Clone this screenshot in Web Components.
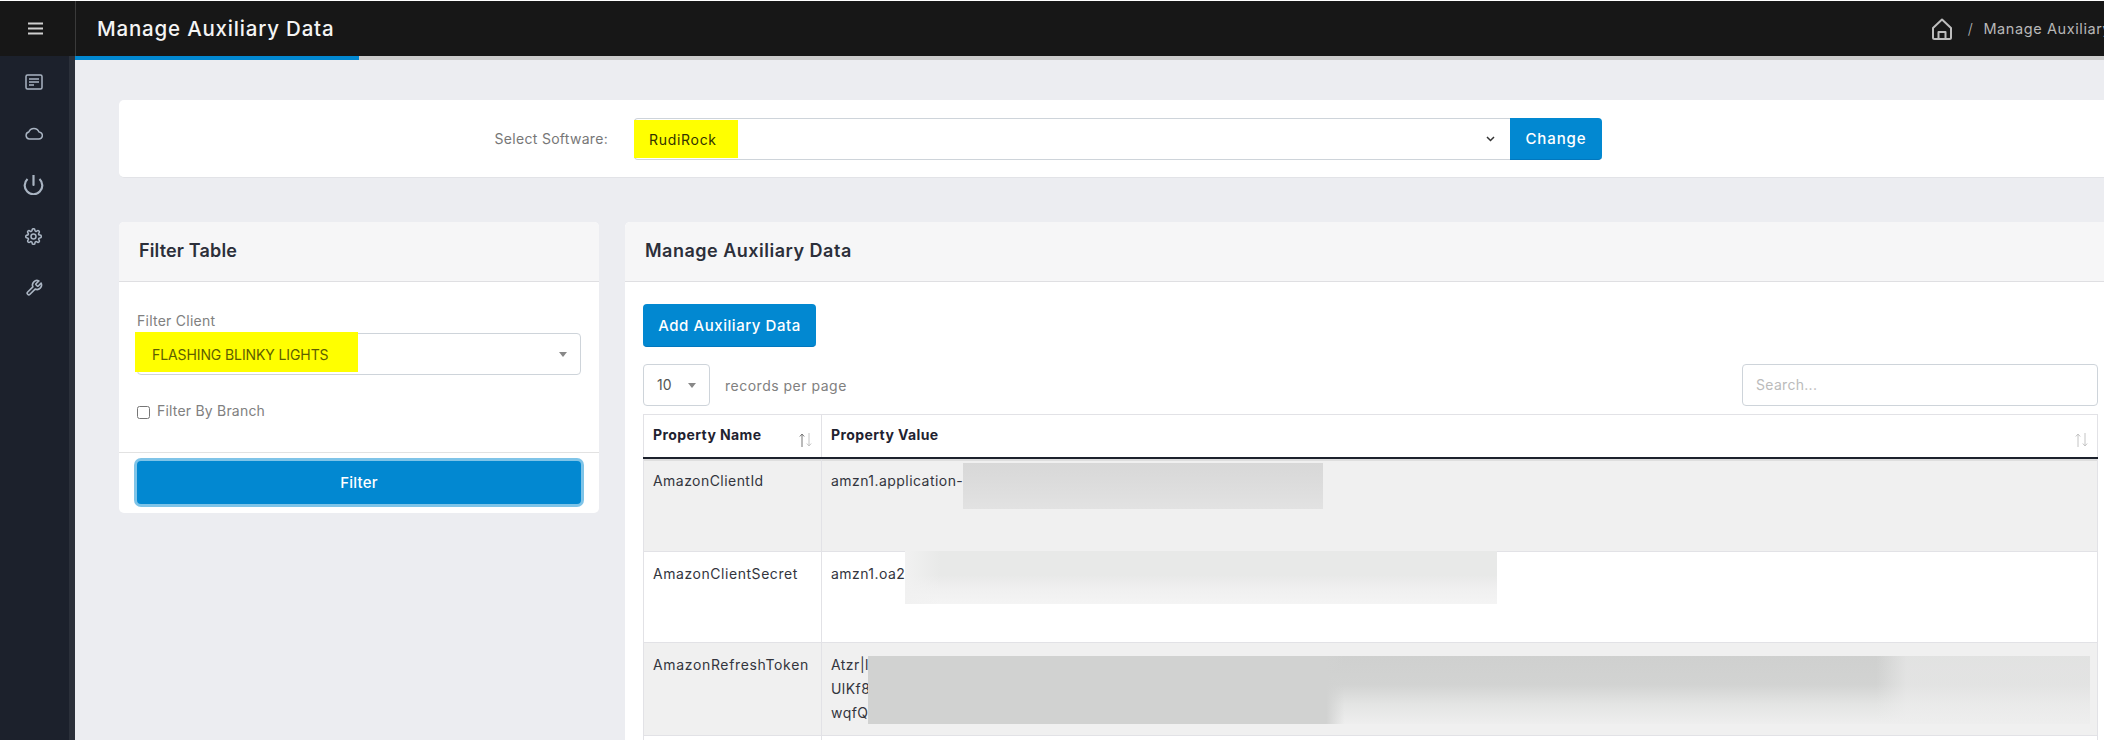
<!DOCTYPE html>
<html>
<head>
<meta charset="utf-8">
<title>Manage Auxiliary Data</title>
<style>
    html, body {
        margin: 0;
        padding: 0;
        width: 2104px;
        height: 740px;
        overflow: hidden;
        background: #fff;
        font-family: Inter, "Liberation Sans", sans-serif;
    }
    body { padding-top: 1px; box-sizing: border-box; }
</style>
</head>
<body>
<app-topbar heading="Manage Auxiliary Data"></app-topbar>
<app-layout>
    <app-sidebar slot="side"></app-sidebar>
    <software-card></software-card>
    <div-row>
        <filter-card></filter-card>
        <aux-card></aux-card>
    </div-row>
</app-layout>

<script>
class BaseElement extends HTMLElement {
    constructor() {
        super();
        this.attachShadow({ mode: 'open' });
    }
    getStyle() { return ''; }
    getMarkup() { return '<slot></slot>'; }
    connectedCallback() {
        const template = document.createElement('template');
        template.innerHTML = `<style>:host, * { box-sizing: border-box; } ${this.getStyle()}</style>${this.getMarkup()}`;
        this.shadowRoot.appendChild(template.content.cloneNode(true));
    }
}

class AppTopbar extends BaseElement {
    getStyle() {
        return `
            :host { display: flex; width: 2150px; height: 55px; background: #171717; color: #f4f4f4; align-items: center; }
            .burger { width: 76px; height: 55px; border-right: 1px solid #3a3a3a; display: flex; align-items: center; justify-content: center; padding-right: 5px; }
            h1 { margin: 0 0 0 21px; font-size: 20.5px; line-height: 55px; font-weight: 500; letter-spacing: 0.8px; white-space: nowrap; }
            nav { margin-left: auto; display: flex; align-items: center; color: #b8b8b8; font-size: 14.5px; letter-spacing: 0.6px; white-space: nowrap; }
            .sep { margin: 0 10px 0 16px; font-weight: 300; }
            svg { display: block; }
        `;
    }
    getMarkup() {
        return `
            <div class="burger">
                <svg width="15" height="13" viewBox="0 0 15 13"><path d="M0 1.5h15M0 6.5h15M0 11.5h15" stroke="#cfcfcf" stroke-width="2.2"/></svg>
            </div>
            <h1>${this.getAttribute('heading')}</h1>
            <nav>
                <svg width="20" height="22" viewBox="0 0 20 22" fill="none" stroke="#bdbdbd" stroke-width="2" stroke-linejoin="round"><path d="M1 10 10 1.5 19 10v9.5a1.5 1.5 0 0 1-1.5 1.5h-15A1.5 1.5 0 0 1 1 19.500z"/><path d="M6.500 21v-7h7v7"/></svg>
                <span class="sep">/</span>
                <span>Manage Auxiliary Data</span>
            </nav>
        `;
    }
}

class AppLayout extends BaseElement {
    getStyle() {
        return `
            :host { display: flex; height: 684px; overflow: hidden; }
            .main { flex: none; width: 2095px; background: #ecedf1; }
            .progress { height: 4px; background: #cccccc; }
            .progress div { width: 284px; height: 4px; background: #0288d1; }
            .content { padding: 40px 54px 0 44px; display: flex; flex-direction: column; gap: 44px; }
        `;
    }
    getMarkup() {
        return `
            <slot name="side"></slot>
            <div class="main">
                <div class="progress"><div></div></div>
                <div class="content"><slot></slot></div>
            </div>
        `;
    }
}

class AppSidebar extends BaseElement {
    getStyle() {
        return `
            :host { display: block; flex: none; width: 75px; background: #1c212c; border-right: 6px solid #2b303a; padding-right: 2px; }
            a { display: flex; height: 51.5px; align-items: center; justify-content: center; }
            svg { display: block; fill: none; stroke: #a9b4c2; stroke-linecap: round; stroke-linejoin: round; }
        `;
    }
    getMarkup() {
        return `
            <a><svg width="18" height="16" viewBox="0 0 18 16" stroke-width="1.5"><rect x="1" y="1" width="16" height="14" rx="1.500"/><path d="M4 5h10M4 8h10M4 11h5" stroke-linecap="butt"/></svg></a>
            <a><svg width="18" height="13" viewBox="0 0 18 13" stroke-width="1.500"><path d="M4.500 12a3.500 3.500 0 0 1-.7-6.900A5.500 5.500 0 0 1 14 5a3.500 3.500 0 0 1-.3 7z"/></svg></a>
            <a><svg width="21" height="20" viewBox="0 0 21 20" stroke-width="2.200" stroke-linecap="butt"><path d="M10.500 0v10"/><path d="M4.500 4a8.800 8.800 0 1 0 12 0" stroke-linecap="butt"/></svg></a>
            <a><svg width="17" height="17" viewBox="0 0 24 24" stroke-width="2.200"><circle cx="12" cy="12" r="3.500"/><path d="M19.400 15a1.650 1.650 0 0 0 .33 1.820l.06.06a2 2 0 0 1 0 2.830 2 2 0 0 1-2.830 0l-.06-.06a1.650 1.650 0 0 0-1.820-.33 1.650 1.650 0 0 0-1 1.510V21a2 2 0 0 1-2 2 2 2 0 0 1-2-2v-.09A1.650 1.650 0 0 0 9 19.400a1.650 1.650 0 0 0-1.820.33l-.06.06a2 2 0 0 1-2.830 0 2 2 0 0 1 0-2.830l.06-.06a1.650 1.650 0 0 0 .33-1.820 1.650 1.650 0 0 0-1.510-1H3a2 2 0 0 1-2-2 2 2 0 0 1 2-2h.09A1.650 1.650 0 0 0 4.600 9a1.650 1.650 0 0 0-.33-1.820l-.06-.06a2 2 0 0 1 0-2.830 2 2 0 0 1 2.830 0l.06.06a1.650 1.650 0 0 0 1.820.33H9a1.650 1.650 0 0 0 1-1.510V3a2 2 0 0 1 2-2 2 2 0 0 1 2 2v.09a1.650 1.650 0 0 0 1 1.510 1.650 1.650 0 0 0 1.820-.33l.06-.06a2 2 0 0 1 2.830 0 2 2 0 0 1 0 2.830l-.06.06a1.650 1.650 0 0 0-.33 1.820V9a1.650 1.650 0 0 0 1.510 1H21a2 2 0 0 1 2 2 2 2 0 0 1-2 2h-.09a1.650 1.650 0 0 0-1.510 1z"/></svg></a>
            <a><svg width="18" height="18" viewBox="0 0 24 24" stroke-width="2.200"><path d="M14.700 6.300a1 1 0 0 0 0 1.400l1.600 1.600a1 1 0 0 0 1.400 0l3.770-3.770a6 6 0 0 1-7.940 7.940l-6.910 6.910a2.120 2.120 0 0 1-3-3l6.910-6.910a6 6 0 0 1 7.940-7.940l-3.760 3.760z"/></svg></a>
        `;
    }
}

class DivRow extends BaseElement {
    getStyle() {
        return `:host { display: flex; gap: 26px; align-items: flex-start; }`;
    }
}

class AppButton extends BaseElement {
    getStyle() {
        return `
            :host { display: block; }
            button { display: block; width: 100%; height: 43px; border: 0; border-bottom: 1px solid #0277bd; border-radius: 4px; background: #0288d1; color: #fff; font: 500 15px Inter, "Liberation Sans", sans-serif; letter-spacing: 0.55px; padding: 0; }
            :host([focus]) button { box-shadow: 0 0 0 3px #7fc4e8; border-bottom: 0; letter-spacing: 0.2px; }
            :host([joined]) button { border-radius: 0 4px 4px 0; height: 42px; letter-spacing: 0.9px; }
        `;
    }
    getMarkup() {
        return `<button><slot></slot></button>`;
    }
}

class SoftwareCard extends BaseElement {
    getStyle() {
        return `
            :host { display: flex; height: 78px; background: #fff; border-radius: 5px; border-bottom: 1px solid #e2e3e7; align-items: center; padding-top: 1px; color: #777; font-size: 14px; }
            label { width: 489px; text-align: right; letter-spacing: 0.3px; margin-top: -1px; }
            .select { position: relative; width: 876px; height: 42px; margin-left: 26px; border: 1px solid #ced4da; border-right: 0; border-radius: 4px 0 0 4px; display: flex; align-items: center; padding-left: 14px; color: #333300; letter-spacing: 0.7px; background: #fff; }
            .mark { position: absolute; left: -1px; top: 1px; width: 104px; height: 38px; background: #ffff00; }
            .text { position: relative; }
            svg { position: absolute; right: 15px; top: 17px; }
            app-button { width: 92px; }
        `;
    }
    getMarkup() {
        return `
            <label>Select Software:</label>
            <div class="select">
                <div class="mark"></div>
                <span class="text">RudiRock</span>
                <svg width="9" height="6" viewBox="0 0 9 6" fill="none" stroke="#333" stroke-width="1.500"><path d="M1 1l3.500 3.500L8 1"/></svg>
            </div>
            <app-button joined>Change</app-button>
        `;
    }
}

class CardHeader extends BaseElement {
    getStyle() {
        return `
            :host { display: block; height: 60px; background: #f6f6f7; border-bottom: 1px solid #dfdfe2; border-radius: 5px 5px 0 0; padding-left: 20px; font-size: 18px; font-weight: 600; line-height: 58px; color: #2c2f3a; letter-spacing: 0.15px; }
            :host([wide]) { letter-spacing: 0.5px; }
        `;
    }
}

class FilterCard extends BaseElement {
    getStyle() {
        return `
            :host { display: block; flex: none; width: 480px; height: 291px; background: #fff; border-radius: 5px; color: #808080; font-size: 14px; }
            .body { height: 171px; padding: 29px 18px 0; border-bottom: 1px solid #e2e2e2; }
            .label { line-height: 20px; height: 22px; letter-spacing: 0.25px; }
            .select { position: relative; height: 42px; border: 1px solid #ced4da; border-radius: 4px; display: flex; align-items: center; padding-left: 14px; }
            .mark { position: absolute; left: -3px; top: -2px; width: 223px; height: 40px; background: #ffff00; }
            .text { position: relative; color: #5e5e00; letter-spacing: -0.1px; }
            .caret { position: absolute; right: 13px; top: 18px; border: 4px solid transparent; border-top: 5px solid #888; border-bottom: 0; }
            .check { display: flex; align-items: center; gap: 7px; margin-top: 26px; line-height: 20px; letter-spacing: 0.2px; }
            .box { width: 13px; height: 13px; border: 1px solid #767676; border-radius: 2.500px; background: #fff; margin-top: 2px; }
            .foot { padding: 8px 18px 0; }
        `;
    }
    getMarkup() {
        return `
            <card-header>Filter Table</card-header>
            <div class="body">
                <div class="label">Filter Client</div>
                <div class="select">
                    <div class="mark"></div>
                    <span class="text">FLASHING BLINKY LIGHTS</span>
                    <div class="caret"></div>
                </div>
                <div class="check"><div class="box"></div><span>Filter By Branch</span></div>
            </div>
            <div class="foot"><app-button focus>Filter</app-button></div>
        `;
    }
}

class RedactedBlur extends BaseElement {
    getStyle() {
        return `:host { position: absolute; display: block; }`;
    }
}

class SortArrows extends BaseElement {
    getStyle() {
        return `:host { position: absolute; right: 9px; bottom: 10px; display: block; width: 13px; height: 14px; } svg { display: block; }`;
    }
    getMarkup() {
        const up = this.hasAttribute('dark') ? '#777' : '#c4c4c4';
        return `<svg width="13" height="14" viewBox="0 0 13 14" fill="none" stroke-width="1"><path d="M3 14V1M.8 3.500 3 1l2.200 2.500" stroke="${up}"/><path d="M10 0v13M7.800 10.500 10 13l2.200-2.500" stroke="#c4c4c4"/></svg>`;
    }
}

class AuxTable extends BaseElement {
    getStyle() {
        return `
            :host { display: block; }
            table { width: 1455px; border-collapse: collapse; table-layout: fixed; font-size: 14px; line-height: 24px; color: #33353d; }
            th, td { border: 1px solid #e2e2e6; padding: 10px 9px; text-align: left; vertical-align: top; position: relative; white-space: nowrap; overflow: visible; letter-spacing: 0.45px; }
            th { height: 43px; padding: 8px 9px 0; font-weight: 700; color: #1f2230; border-bottom: 2px solid #1c212c; letter-spacing: 0.4px; }
            td { height: 91px; }
            tr.odd td { background: #f0f0f0; }
            tbody tr:first-child td { height: 94px; box-shadow: inset 0 2px 0 #dedede; }
            .secret { letter-spacing: 0.55px; }
            .refresh { letter-spacing: 0.65px; }
            .r1 { left: 141px; top: 4px; width: 360px; height: 46px; background: linear-gradient(180deg, #d8d8d8 0, #dcdcdc 45%, #e2e2e2 100%); }
            .r2 { left: 83px; top: -1px; width: 592px; height: 53px; background: linear-gradient(90deg, #f1f1f1 0, rgba(241,241,241,0) 6%), linear-gradient(180deg, #e8e9e8 0, #e8e9e8 45%, #f0f0f0 72%, #f4f4f4 100%); }
            .r3 { left: 46px; top: 13px; width: 1222px; height: 68px; background:
                linear-gradient(90deg, #d1d2d1 0, #d1d2d1 37.500%, rgba(209,210,209,0) 39%),
                linear-gradient(90deg, rgba(238,238,238,0) 82.500%, rgba(238,238,238,.6) 85%),
                linear-gradient(180deg, #cfd0cf 0, #d2d3d2 42%, #e4e5e4 72%, #eeeeee 100%); }
        `;
    }
    getMarkup() {
        return `
            <table>
                <colgroup><col style="width:178px"><col></colgroup>
                <thead>
                    <tr><th>Property Name<sort-arrows dark></sort-arrows></th><th>Property Value<sort-arrows></sort-arrows></th></tr>
                </thead>
                <tbody>
                    <tr class="odd"><td>AmazonClientId</td><td>amzn1.application-<redacted-blur class="r1"></redacted-blur></td></tr>
                    <tr><td class="secret">AmazonClientSecret</td><td>amzn1.oa2<redacted-blur class="r2"></redacted-blur></td></tr>
                    <tr class="odd"><td class="refresh">AmazonRefreshToken</td><td>Atzr|l<br>UlKf8<br>wqfQ<redacted-blur class="r3"></redacted-blur></td></tr>
                    <tr><td></td><td></td></tr>
                </tbody>
            </table>
        `;
    }
}

class AuxCard extends BaseElement {
    getStyle() {
        return `
            :host { display: block; flex: none; width: 1491px; height: 518px; overflow: hidden; background: #fff; border-radius: 5px 5px 0 0; color: #808080; font-size: 14px; }
            .body { padding: 22px 18px 0; }
            app-button { width: 173px; }
            .tools { display: flex; align-items: center; margin: 17px 0 8px; height: 42px; }
            .len { position: relative; width: 67px; height: 42px; border: 1px solid #ced4da; border-radius: 4px; color: #555; font-size: 14px; line-height: 40px; padding-left: 13px; }
            .caret { position: absolute; right: 13px; top: 18px; border: 4px solid transparent; border-top: 5px solid #888; border-bottom: 0; }
            .per { margin-left: 15px; letter-spacing: 0.5px; }
            .search { margin-left: auto; width: 356px; height: 42px; border: 1px solid #ced4da; border-radius: 4px; color: #bbb; line-height: 40px; padding-left: 13px; letter-spacing: 0.3px; }
        `;
    }
    getMarkup() {
        return `
            <card-header wide>Manage Auxiliary Data</card-header>
            <div class="body">
                <app-button>Add Auxiliary Data</app-button>
                <div class="tools">
                    <div class="len">10<div class="caret"></div></div>
                    <span class="per">records per page</span>
                    <div class="search">Search...</div>
                </div>
                <aux-table></aux-table>
            </div>
        `;
    }
}

customElements.define('app-button', AppButton);
customElements.define('card-header', CardHeader);
customElements.define('sort-arrows', SortArrows);
customElements.define('redacted-blur', RedactedBlur);
customElements.define('aux-table', AuxTable);
customElements.define('app-topbar', AppTopbar);
customElements.define('app-layout', AppLayout);
customElements.define('app-sidebar', AppSidebar);
customElements.define('div-row', DivRow);
customElements.define('software-card', SoftwareCard);
customElements.define('filter-card', FilterCard);
customElements.define('aux-card', AuxCard);
</script>
</body>
</html>
